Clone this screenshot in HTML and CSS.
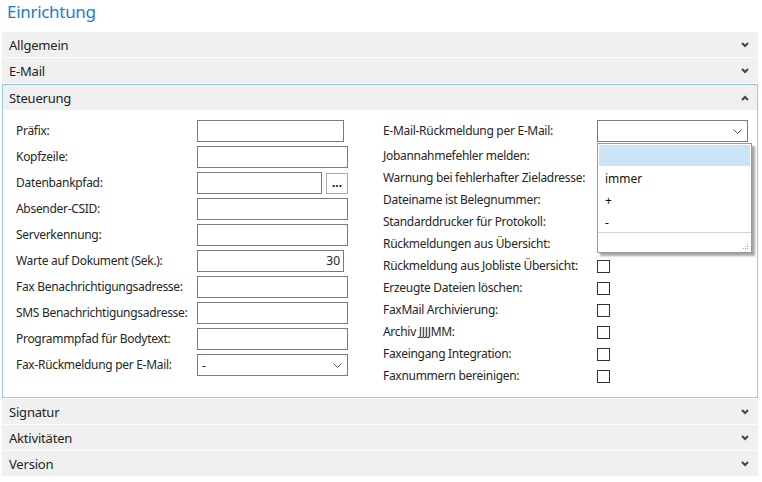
FILE: index.html
```html
<!DOCTYPE html>
<html lang="de">
<head>
<meta charset="utf-8">
<title>Einrichtung</title>
<link rel="stylesheet" href="styles.css">
</head>
<body>
<h1 class="title">Einrichtung</h1>
<div class="accordion">
  <div class="bar"><span>Allgemein</span><svg class="chev" width="8" height="6" viewBox="0 0 8 6"><polyline points="1,1 4,4 7,1"/></svg></div>
  <div class="bar"><span>E-Mail</span><svg class="chev" width="8" height="6" viewBox="0 0 8 6"><polyline points="1,1 4,4 7,1"/></svg></div>
  <div class="panel">
    <div class="bar bar-open"><span>Steuerung</span><svg class="chev" width="8" height="6" viewBox="0 0 8 6"><polyline points="1,5 4,2 7,5"/></svg></div>
    <div class="panel-body">
      <div class="form form-left">
        <label class="lbl">Präfix:</label><div class="ctl"><div class="input narrow"></div></div>
        <label class="lbl">Kopfzeile:</label><div class="ctl"><div class="input"></div></div>
        <label class="lbl">Datenbankpfad:</label><div class="ctl ctl-split"><div class="input path"></div><div class="btn">...</div></div>
        <label class="lbl">Absender-CSID:</label><div class="ctl"><div class="input"></div></div>
        <label class="lbl">Serverkennung:</label><div class="ctl"><div class="input"></div></div>
        <label class="lbl">Warte auf Dokument (Sek.):</label><div class="ctl"><div class="input narrow num">30</div></div>
        <label class="lbl">Fax Benachrichtigungsadresse:</label><div class="ctl"><div class="input"></div></div>
        <label class="lbl">SMS Benachrichtigungsadresse:</label><div class="ctl"><div class="input"></div></div>
        <label class="lbl">Programmpfad für Bodytext:</label><div class="ctl"><div class="input"></div></div>
        <label class="lbl">Fax-Rückmeldung per E-Mail:</label><div class="ctl"><div class="input select"><span>-</span><svg class="schev" width="9" height="5" viewBox="0 0 9 5"><polyline points="0.5,0.5 4.5,4.5 8.5,0.5"/></svg></div></div>
      </div>
      <div class="form form-right">
        <label class="lbl lbl-first">E-Mail-Rückmeldung per E-Mail:</label>
        <div class="ctl ctl-first">
          <div class="input select"><span></span><svg class="schev" width="9" height="5" viewBox="0 0 9 5"><polyline points="0.5,0.5 4.5,4.5 8.5,0.5"/></svg></div>
          <div class="dropdown">
            <div class="opt opt-sel"></div>
            <div class="opt">immer</div>
            <div class="opt">+</div>
            <div class="opt">-</div>
            <div class="grip"><svg width="6" height="6" viewBox="0 0 6 6"><rect x="4" y="0" width="1" height="1"/><rect x="2" y="2" width="1" height="1"/><rect x="4" y="2" width="1" height="1"/><rect x="0" y="4" width="1" height="1"/><rect x="2" y="4" width="1" height="1"/><rect x="4" y="4" width="1" height="1"/></svg></div>
          </div>
        </div>
        <label class="lbl">Jobannahmefehler melden:</label><div class="ctl"><div class="check"></div></div>
        <label class="lbl">Warnung bei fehlerhafter Zieladresse:</label><div class="ctl"><div class="check"></div></div>
        <label class="lbl">Dateiname ist Belegnummer:</label><div class="ctl"><div class="check"></div></div>
        <label class="lbl">Standarddrucker für Protokoll:</label><div class="ctl"><div class="check"></div></div>
        <label class="lbl">Rückmeldungen aus Übersicht:</label><div class="ctl"><div class="check"></div></div>
        <label class="lbl">Rückmeldung aus Jobliste Übersicht:</label><div class="ctl"><div class="check"></div></div>
        <label class="lbl">Erzeugte Dateien löschen:</label><div class="ctl"><div class="check"></div></div>
        <label class="lbl">FaxMail Archivierung:</label><div class="ctl"><div class="check"></div></div>
        <label class="lbl">Archiv JJJJMM:</label><div class="ctl"><div class="check"></div></div>
        <label class="lbl">Faxeingang Integration:</label><div class="ctl"><div class="check"></div></div>
        <label class="lbl">Faxnummern bereinigen:</label><div class="ctl"><div class="check"></div></div>
      </div>
    </div>
  </div>
  <div class="bar"><span>Signatur</span><svg class="chev" width="8" height="6" viewBox="0 0 8 6"><polyline points="1,1 4,4 7,1"/></svg></div>
  <div class="bar"><span>Aktivitäten</span><svg class="chev" width="8" height="6" viewBox="0 0 8 6"><polyline points="1,1 4,4 7,1"/></svg></div>
  <div class="bar"><span>Version</span><svg class="chev" width="8" height="6" viewBox="0 0 8 6"><polyline points="1,1 4,4 7,1"/></svg></div>
</div>
</body>
</html>
```

FILE: styles.css
```css
* { box-sizing: border-box; }
html, body { margin: 0; padding: 0; background: #fff; }
body {
  font-family: "Noto Sans", "Open Sans", sans-serif;
  color: #262626;
  width: 762px;
  height: 482px;
  overflow: hidden;
}
.title {
  margin: 0;
  padding: 0 0 0 7px;
  height: 32px;
  font-size: 17px;
  font-weight: 400;
  letter-spacing: -0.3px;
  line-height: 24px;
  color: #1c7ad4;
}
.accordion {
  display: flex;
  flex-direction: column;
  gap: 1px;
  margin: 0 4px 0 2px;
}
.bar {
  height: 25px;
  background: #f0f0f0;
  display: flex;
  align-items: center;
  justify-content: space-between;
  padding: 0 9px 0 7px;
  font-size: 13px;
  letter-spacing: -0.2px;
  color: #222;
}
.bar-open { height: 25px; padding: 0 8px 0 6px; }
.chev polyline { fill: none; stroke: #444; stroke-width: 2; }
.panel {
  border: 1px solid #99c5f2;
  height: 314px;
}
.panel-body {
  display: flex;
  gap: 35px;
  padding: 10px 0 0 13px;
}
.form {
  display: grid;
  grid-auto-rows: 22px;
  align-items: center;
  font-size: 12px;
  letter-spacing: -0.3px;
}
.form-left {
  grid-template-columns: 181px 151px;
  row-gap: 4px;
}
.form-right {
  grid-template-columns: 214px 151px;
  grid-template-rows: 25px;
}
.lbl { line-height: 16px; white-space: nowrap; }
.lbl-first, .ctl-first { align-self: start; }
.lbl-first { margin-top: 3px; }
.ctl { height: 22px; display: flex; align-items: center; position: relative; letter-spacing: 0; }
.ctl-split { gap: 4px; }
.input {
  width: 151px;
  height: 22px;
  border: 1px solid #7a7a7a;
  background: #fff;
}
.input.narrow { width: 147px; }
.input.path { width: 125px; }
.input.num { text-align: right; padding: 0 3px; line-height: 20px; }
.btn {
  width: 22px;
  height: 21px;
  border: 1px solid #adadad;
  background: #fff;
  font-size: 12px;
  font-weight: 700;
  line-height: 18px;
  text-align: center;
  color: #111;
}
.select {
  display: flex;
  align-items: center;
  justify-content: space-between;
  padding: 0 5px 0 4px;
}
.schev polyline { fill: none; stroke: #555; stroke-width: 1; }
.check {
  width: 13px;
  height: 13px;
  border: 1px solid #333;
  background: #fff;
}
.dropdown {
  position: absolute;
  top: 23px;
  left: 0;
  width: 155px;
  height: 110px;
  background: #fff;
  border: 1px solid #9a9a9a;
  box-shadow: 3px 3px 2px rgba(0, 0, 0, 0.35);
  padding: 1px 1px 0 1px;
  display: flex;
  flex-direction: column;
  z-index: 2;
}
.opt {
  height: 22px;
  line-height: 18px;
  padding: 4px 0 0 6px;
  font-size: 12px;
  color: #111;
}
.opt-sel { background: #cce4f7; }
.grip {
  margin-top: auto;
  margin-left: -1px;
  margin-right: -1px;
  height: 20px;
  border-top: 1px solid #d4d4d4;
  display: flex;
  justify-content: flex-end;
  align-items: flex-end;
  padding: 0 2px 2px 0;
}
.grip rect { fill: #a8a8a8; }
```
